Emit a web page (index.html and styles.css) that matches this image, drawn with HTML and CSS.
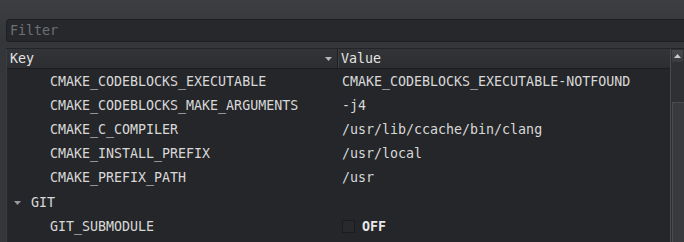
FILE: index.html
```html
<!DOCTYPE html>
<html lang="en">
<head>
    <meta charset="UTF-8">
    <title>CMake Cache</title>
    <link rel="stylesheet" href="styles.css">
</head>
<body>
    <div class="filter">
        <span class="placeholder">Filter</span>
    </div>

    <div class="table">
        <div class="grid">
            <div class="header">
                <div class="head-cell key-head">
                    <span>Key</span>
                    <svg class="sort" width="7" height="4" viewBox="0 0 7 4"><path d="M0 0h7L3.5 4z" fill="#b8b8b8"/></svg>
                </div>
                <div class="head-cell">Value</div>
            </div>
            <div class="rows">
                <div class="row">
                    <div class="key child">CMAKE_CODEBLOCKS_EXECUTABLE</div>
                    <div class="value">CMAKE_CODEBLOCKS_EXECUTABLE-NOTFOUND</div>
                </div>
                <div class="row">
                    <div class="key child">CMAKE_CODEBLOCKS_MAKE_ARGUMENTS</div>
                    <div class="value">-j4</div>
                </div>
                <div class="row">
                    <div class="key child">CMAKE_C_COMPILER</div>
                    <div class="value">/usr/lib/ccache/bin/clang</div>
                </div>
                <div class="row">
                    <div class="key child">CMAKE_INSTALL_PREFIX</div>
                    <div class="value">/usr/local</div>
                </div>
                <div class="row">
                    <div class="key child">CMAKE_PREFIX_PATH</div>
                    <div class="value">/usr</div>
                </div>
                <div class="row">
                    <div class="key group">
                        <svg class="arrow" width="7" height="4" viewBox="0 0 7 4"><path d="M0 0h7L3.5 4z" fill="#9a9a9a"/></svg>
                        <span>GIT</span>
                    </div>
                    <div class="value"></div>
                </div>
                <div class="row">
                    <div class="key child">GIT_SUBMODULE</div>
                    <div class="value check">
                        <span class="box"></span>
                        <span class="off">OFF</span>
                    </div>
                </div>
            </div>
        </div>
        <div class="scrollbar">
            <div class="up">
                <svg width="7" height="4" viewBox="0 0 7 4"><path d="M3.5 0L7 4H0z" fill="#c8c8c8"/></svg>
            </div>
            <div class="track"></div>
            <div class="handle"></div>
        </div>
    </div>
</body>
</html>
```

FILE: styles.css
```css
body {
    margin: 0;
    height: 242px;
    overflow: hidden;
    background: linear-gradient(#3d3e41, #35363a 40px);
    font-family: "DejaVu Sans Mono", monospace;
    font-size: 13.3px;
    color: #d8d8d8;
}
.filter {
    margin: 19px -6px 0 6px;
    height: 21px;
    border: 1px solid #1d1e20;
    border-radius: 3px;
    background-color: #27282b;
    display: flex;
    align-items: center;
    padding-left: 3px;
}
.placeholder {
    color: #6f7074;
}
.table {
    margin: 6px 0 0 6px;
    display: flex;
    height: 200px;
    border-top: 1px solid #232427;
}
.grid {
    flex: 1;
    background-color: #252629;
    border-left: 1px solid #3c3d40;
}
.header {
    display: grid;
    grid-template-columns: 331px 1fr;
    height: 19px;
    background: linear-gradient(#333437, #2d2e31);
    border-bottom: 1px solid #1c1d1f;
}
.head-cell {
    display: flex;
    align-items: center;
    padding-left: 3px;
    color: #e4e4e4;
}
.key-head {
    justify-content: space-between;
    padding-right: 5px;
    border-right: 1px solid #1f2022;
    box-shadow: 1px 0 0 #3e3f42;
}
.sort {
    margin-top: 1px;
}
.row {
    display: grid;
    grid-template-columns: 335px 1fr;
    height: 24.2px;
    align-items: center;
}
.key {
    display: flex;
    align-items: center;
}
.child {
    padding-left: 43px;
}
.group {
    padding-left: 7px;
}
.arrow {
    margin-right: 10px;
    margin-top: 1px;
}
.check {
    display: flex;
    align-items: center;
}
.box {
    width: 11px;
    height: 11px;
    border: 1px solid #1b1c1e;
    background-color: #28292c;
    margin-right: 7px;
    margin-top: 1px;
}
.off {
    font-weight: bold;
    color: #e8e8e8;
}
.scrollbar {
    width: 13px;
    background-color: #2f3033;
    border-left: 1px solid #48494c;
    position: relative;
}
.up {
    height: 12px;
    margin: 1px 1px 0 1px;
    background: linear-gradient(#48494c, #3a3b3e);
    display: flex;
    align-items: center;
    justify-content: center;
}
.handle {
    position: absolute;
    top: 53px;
    left: 1px;
    right: 0;
    bottom: 0;
    background-color: #393a3d;
    border: 1px solid #4a4b4e;
    border-right: none;
}
```
